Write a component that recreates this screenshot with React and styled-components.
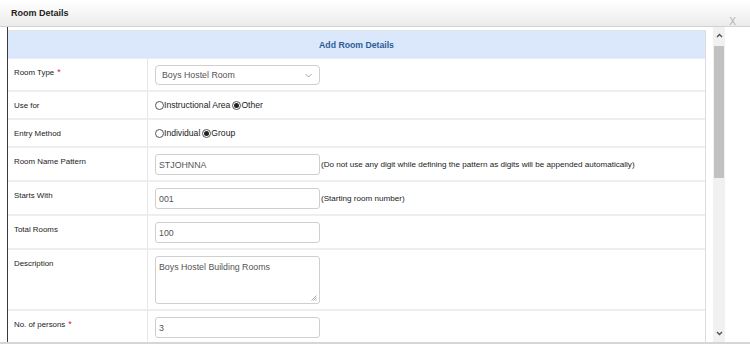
import React from "react";
import styled, { createGlobalStyle } from "styled-components";

const GlobalStyle = createGlobalStyle`
  body {
    margin: 0;
    background: #fff;
    font-family: "Liberation Sans", Arial, sans-serif;
  }
`;

const Dialog = styled.div`
  width: 750px;
  height: 344px;
  overflow: hidden;
  display: flex;
  flex-direction: column;
  background: #fff;
`;

const TitleBar = styled.div`
  height: 26px;
  flex: none;
  display: flex;
  justify-content: space-between;
  padding: 0 14px 0 11px;
  background: linear-gradient(to bottom, #ffffff 0%, #f4f4f4 60%, #ebebeb 100%);
  border-bottom: 1px solid #d2d2d2;
`;

const Title = styled.div`
  font-size: 9px;
  font-weight: bold;
  color: #222;
  line-height: 27px;
`;

const Close = styled.div`
  font-size: 10px;
  color: #b0b0b0;
  align-self: flex-end;
  line-height: 14px;
  margin-bottom: -3px;
`;

const Body = styled.div`
  flex: 1;
  min-height: 0;
  display: flex;
  padding-left: 7px;
  border-bottom: 2px solid #d6d6d6;
`;

const Scroller = styled.div`
  flex: 1;
  display: flex;
  gap: 7px;
  border-left: 1px solid #3a3a3a;
  padding-top: 3px;
  overflow: hidden;
`;

const FormTable = styled.div`
  width: 697px;
  border-right: 1px solid #dcdcdc;
  border-top: 1px solid #e4e4e4;
  display: grid;
  grid-template-columns: 140px 1fr;
  align-content: start;
`;

const Caption = styled.div`
  grid-column: 1 / -1;
  height: 27px;
  background: #dbe8fb;
  color: #2b5d97;
  font-weight: bold;
  font-size: 8.7px;
  display: flex;
  align-items: center;
  justify-content: center;
  border-bottom: 1px solid #e6eef8;
`;

const Label = styled.div`
  padding: 8px 6px 0 6px;
  font-size: 7.9px;
  line-height: 11px;
  color: #222;
  border-right: 1px solid #e6e6e6;
  border-bottom: 2px solid #eeeeee;
`;

const Req = styled.span`
  color: #e02020;
  font-size: 9px;
  margin-left: 3px;
`;

const Value = styled.div`
  padding: 6px 7px 5px;
  display: flex;
  align-items: ${(p) => (p.$top ? "flex-start" : "center")};
  border-bottom: 2px solid #eeeeee;
  font-size: 8.1px;
  color: #222;
`;

const TextBox = styled.div`
  width: 165px;
  height: ${(p) => (p.$h ? p.$h : 21)}px;
  box-sizing: border-box;
  border: 1px solid #cfcfcf;
  border-radius: 3px;
  background: #fff;
  font-size: 8.8px;
  color: #555;
  padding: 0 0 0 3px;
  display: flex;
  align-items: ${(p) => (p.$area ? "flex-start" : "center")};
  padding-top: ${(p) => (p.$area ? "5px" : "0")};
  position: relative;
  flex: none;
`;

const SelectBox = styled(TextBox)`
  height: 20px;
  padding-left: 6px;
  border-radius: 4px;
  justify-content: space-between;
  padding-right: 7px;
`;

const Grip = styled.svg`
  position: absolute;
  right: 2px;
  bottom: 2px;
`;

const Hint = styled.span`
  margin-left: 1px;
  white-space: nowrap;
`;

const RadioGroup = styled.div`
  display: flex;
  align-items: center;
  font-size: 8.6px;
  color: #222;
  line-height: 15px;
`;

const Radio = styled.span`
  width: 7px;
  height: 7px;
  border-radius: 50%;
  border: 1px solid #555;
  background: #fff;
  display: inline-flex;
  align-items: center;
  justify-content: center;
  margin-right: 0;
  margin-left: ${(p) => (p.$first ? "0" : "2px")};
  &::after {
    content: "";
    width: 5px;
    height: 5px;
    border-radius: 50%;
    background: ${(p) => (p.$checked ? "#222" : "transparent")};
  }
`;

const ScrollTrack = styled.div`
  width: 12px;
  flex: none;
  background: #f1f1f1;
  display: flex;
  flex-direction: column;
  align-items: center;
  margin-top: -3px;
`;

const ArrowBtn = styled.div`
  height: 17px;
  width: 12px;
  display: flex;
  align-items: center;
  justify-content: center;
  background: #f1f1f1;
`;

const Thumb = styled.div`
  width: 10px;
  height: 132px;
  background: #c1c1c1;
  margin-top: 2px;
`;

const Spacer = styled.div`
  flex: 1;
`;

const Chevron = ({ up }) => (
  <svg width="7" height="5" viewBox="0 0 7 5">
    <path
      d={up ? "M1 4 L3.5 1.5 L6 4" : "M1 1 L3.5 3.5 L6 1"}
      fill="none"
      stroke="#505050"
      strokeWidth="1.4"
    />
  </svg>
);

const rows = [
  { label: "Room Name Pattern", value: "STJOHNNA", hint: "(Do not use any digit while defining the pattern as digits will be appended automatically)" },
  { label: "Starts With", value: "001", hint: "(Starting room number)" },
  { label: "Total Rooms", value: "100" },
];

const App = () => {
  return (
    <Dialog>
      <GlobalStyle />
      <TitleBar>
        <Title>Room Details</Title>
        <Close>X</Close>
      </TitleBar>
      <Body>
        <Scroller>
          <FormTable>
            <Caption>Add Room Details</Caption>

            <Label>
              Room Type<Req>*</Req>
            </Label>
            <Value>
              <SelectBox>
                <span>Boys Hostel Room</span>
                <svg width="7" height="5" viewBox="0 0 7 5">
                  <path d="M0.5 1 L3.5 4 L6.5 1" fill="none" stroke="#9a9a9a" strokeWidth="0.9" />
                </svg>
              </SelectBox>
            </Value>

            <Label>Use for</Label>
            <Value>
              <RadioGroup>
                <Radio $first />
                Instructional Area
                <Radio $checked />
                Other
              </RadioGroup>
            </Value>

            <Label>Entry Method</Label>
            <Value>
              <RadioGroup>
                <Radio $first />
                Individual
                <Radio $checked />
                Group
              </RadioGroup>
            </Value>

            {rows.map((r) => (
              <React.Fragment key={r.label}>
                <Label>{r.label}</Label>
                <Value>
                  <TextBox>{r.value}</TextBox>
                  {r.hint && <Hint>{r.hint}</Hint>}
                </Value>
              </React.Fragment>
            ))}

            <Label>Description</Label>
            <Value $top>
              <TextBox $area $h={48}>
                Boys Hostel Building Rooms
                <Grip width="6" height="6" viewBox="0 0 6 6">
                  <path d="M5.5 0.5 L0.5 5.5 M5.5 2.5 L2.5 5.5 M5.5 4.5 L4.5 5.5" stroke="#999" strokeWidth="0.8" />
                </Grip>
              </TextBox>
            </Value>

            <Label>
              No. of persons<Req>*</Req>
            </Label>
            <Value>
              <TextBox>3</TextBox>
            </Value>
          </FormTable>
          <ScrollTrack>
            <ArrowBtn>
              <Chevron up />
            </ArrowBtn>
            <Thumb />
            <Spacer />
            <ArrowBtn>
              <Chevron />
            </ArrowBtn>
          </ScrollTrack>
        </Scroller>
      </Body>
    </Dialog>
  );
};

export default App;
